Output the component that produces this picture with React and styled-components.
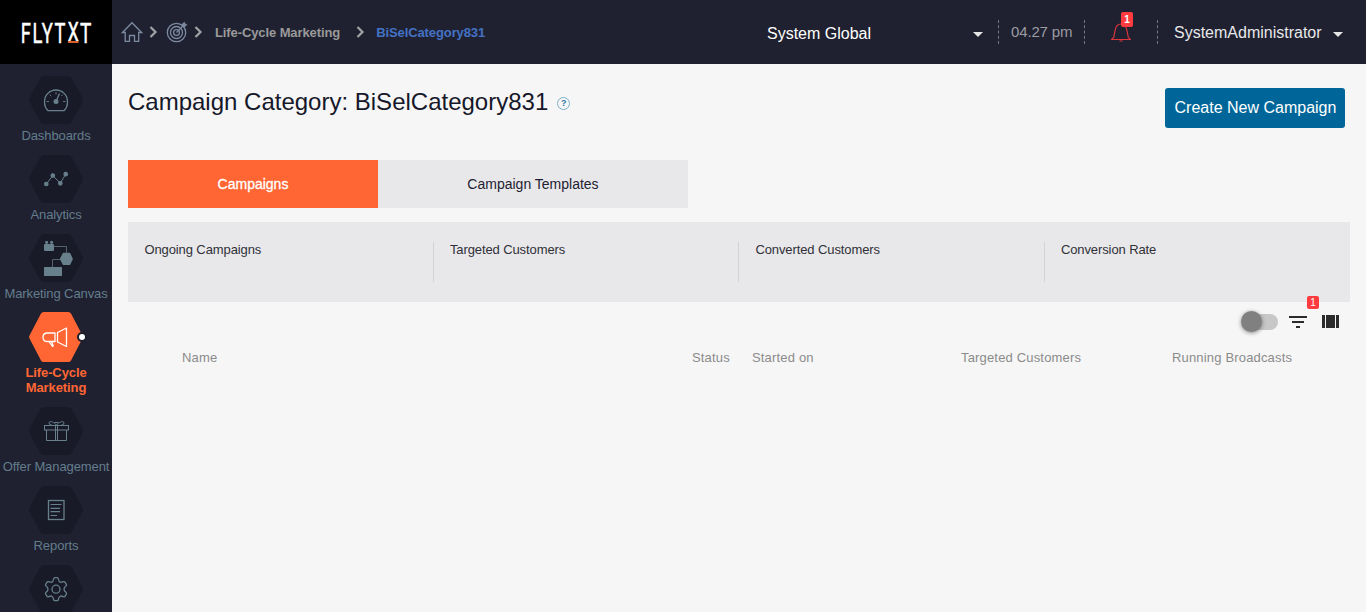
import React from 'react';
import styled, { createGlobalStyle, css } from 'styled-components';

const GlobalStyle = createGlobalStyle`
  * { box-sizing: border-box; }
  body {
    margin: 0;
    background: #f6f6f6;
    font-family: "Liberation Sans", Arial, sans-serif;
    color: #1f2131;
    overflow: hidden;
  }
`;

const Page = styled.div`
  display: grid;
  grid-template: 64px 1fr / 112px 1fr;
  height: 612px;
  overflow: hidden;
`;

const LogoBox = styled.div`
  background: #000;
  svg { display: block; }
`;

const Header = styled.header`
  display: flex;
  align-items: center;
  padding-right: 23px;
  background: #1f2131;
`;

const Crumbs = styled.nav`
  display: flex;
  align-items: center;
  flex: 1;
  padding-left: 9px;
`;

const Crumb = styled.span`
  padding-top: 1px;
  font-size: 13px;
  font-weight: 700;
  line-height: 16px;
  letter-spacing: -0.1px;
  color: ${(p) => (p.$current ? '#4472c4' : '#9a9a9a')};
`;

const Chevron = styled.svg`
  width: 9px;
  height: 12px;
  margin: 0 ${(p) => p.$right}px 0 ${(p) => p.$left}px;
  fill: none;
  stroke: #a2a2a4;
  stroke-width: 2.2;
`;

const CrumbIcon = styled.svg`
  width: 22px;
  height: 22px;
  fill: none;
  stroke: #7c8aa0;
  stroke-width: 1.3;
`;

const Picker = styled.div`
  display: flex;
  align-items: center;
  justify-content: space-between;
  width: ${(p) => p.$width}px;
  color: ${(p) => p.$color};
  font-size: 16px;
  line-height: 20px;
  padding-top: ${(p) => p.$drop}px;
`;

const Caret = styled.span`
  border: 5px solid transparent;
  border-top-color: #e6e6e6;
  border-bottom: 0;
  margin-top: ${(p) => p.$drop}px;
`;

const Clock = styled.div`
  width: 87px;
  height: 24px;
  margin: 0 0 0 15px;
  border-left: 1px dashed #77787f;
  border-right: 1px dashed #77787f;
  padding-left: 12px;
  font-size: 15px;
  line-height: 24px;
  letter-spacing: -0.15px;
  color: #9b9ba1;
`;

const Alerts = styled.div`
  position: relative;
  width: 73px;
  height: 24px;
  border-right: 1px dashed #77787f;
  margin-right: 16px;
  svg { display: block; margin: 0 0 0 26px; }
`;

const Count = styled.span`
  position: absolute;
  top: ${(p) => p.$top}px;
  left: ${(p) => p.$left}px;
  width: 12px;
  height: ${(p) => p.$height}px;
  border-radius: 2px;
  background: #ff3b3f;
  color: #fff;
  font-size: 10px;
  font-weight: ${(p) => p.$weight || 400};
  line-height: ${(p) => p.$height}px;
  text-align: center;
`;

const Sidebar = styled.aside`
  display: flex;
  flex-direction: column;
  gap: 12px;
  padding-top: 12px;
  background: #1f2131;
  overflow: hidden;
`;

const NavItem = styled.a`
  display: flex;
  flex-direction: column;
  align-items: center;
  gap: 4px;
  flex: none;
  font-size: 13px;
  line-height: 15px;
  letter-spacing: -0.1px;
  text-align: center;
  white-space: pre-line;
  color: #637d8c;
  ${(p) => p.$active && css`
    color: #ff6633;
    font-weight: 700;
  `}
`;

const NavIcon = styled.svg`
  display: block;
  width: 56px;
  height: 48px;
  overflow: visible;
  fill: none;
  stroke: #67808b;
  stroke-width: 1.3;
`;

const Main = styled.main`
  padding: 24px 16px 0;
  background: #f6f6f6;
`;

const TitleRow = styled.div`
  display: flex;
  justify-content: space-between;
  padding-right: 5px;
`;

const Title = styled.h1`
  display: flex;
  align-items: center;
  gap: 9px;
  margin: 0;
  height: 28px;
  font-size: 24px;
  font-weight: 400;
  color: #16182a;
`;

const Help = styled.span`
  width: 13px;
  height: 13px;
  margin-top: 3px;
  border: 1px solid #7eafca;
  border-radius: 50%;
  color: #2f7ba5;
  font-size: 9px;
  font-weight: 700;
  line-height: 11px;
  text-align: center;
`;

const Button = styled.button`
  width: 180px;
  height: 40px;
  padding: 0 0 0 1px;
  border: 0;
  border-radius: 3px;
  background: #006699;
  color: #fff;
  font: 16px/38px "Liberation Sans", Arial, sans-serif;
`;

const Tabs = styled.div`
  display: flex;
  margin-top: 32px;
`;

const Tab = styled.div`
  width: ${(p) => p.$width}px;
  height: 48px;
  line-height: 48px;
  font-size: 14px;
  text-align: center;
  background: ${(p) => (p.$active ? '#ff6633' : '#e8e8ea')};
  color: ${(p) => (p.$active ? '#fff' : '#1f2131')};
  ${(p) => p.$active && '-webkit-text-stroke: 0.3px #fff;'}
`;

const Stats = styled.div`
  display: grid;
  grid-template-columns: repeat(4, 1fr);
  height: 80px;
  margin-top: 14px;
  padding: 20px 0;
  background: #e8e8ea;
`;

const Stat = styled.div`
  padding-left: 16.4px;
  font-size: 13px;
  line-height: 15px;
  letter-spacing: -0.1px;
  color: #303038;
  border-right: 1px solid #d3d3d6;
  &:last-child { border-right: 0; }
`;

const Tools = styled.div`
  position: relative;
  display: flex;
  align-items: center;
  justify-content: flex-end;
  height: 39px;
  padding-right: 11px;
`;

const ColumnsIcon = styled.svg`
  margin-left: 15px;
`;

const Toggle = styled.span`
  display: flex;
  align-items: center;
  width: 36px;
  height: 16px;
  border-radius: 8px;
  background: #c7c7c7;
  margin-right: 11px;
  &::before {
    content: '';
    width: 21px;
    height: 21px;
    margin-left: -1px;
    border-radius: 50%;
    background: #808080;
    box-shadow: 0 1px 4px rgba(0, 0, 0, 0.45);
  }
`;

const Table = styled.div`
  display: grid;
  grid-template-columns: 510px 60px 209px 211px 1fr;
  margin-top: 9px;
  padding-left: 54px;
  font-size: 13px;
  line-height: 16px;
  letter-spacing: 0.17px;
  color: #8b8b8b;
`;

const HexShape = ({ active }) =>
  active ? (
    <path d="M15.5 -1H40.5Q42 -1 43 0.5L54.5 22.5Q55.5 24 54.5 25.5L43 47.5Q42 49 40.5 49H15.5Q14 49 13 47.5L1.5 25.5Q0.5 24 1.5 22.5L13 0.5Q14 -1 15.5 -1Z" fill="#ff6633" stroke="none" />
  ) : (
    <path d="M16 0H40Q42.5 0 44 2.5L54.3 21.5Q55.7 24 54.3 26.5L44 45.5Q42.5 48 40 48H16Q13.5 48 12 45.5L1.7 26.5Q0.3 24 1.7 21.5L12 2.5Q13.5 0 16 0Z" fill="#181a28" stroke="none" />
  );

const gauge = (
  <>
    <path d="M20 34.7C17.5 32.5 16.5 29 16.5 25.5A11.5 11.5 0 0 1 39.5 25.5C39.5 29 38.5 32.5 36 34.7Z" strokeLinejoin="round" />
    <circle cx="28" cy="25.5" r="2.5" fill="#67808b" stroke="none" />
    <path d="M28 25.5L31.5 17.5" />
    <path d="M18.5 25.5h2.5M35 25.5h2.5M21.5 18.5l1.7 1.7M28 16v2.5M34.7 18.7l-1.3 1.3" strokeWidth="0.9" />
  </>
);

const lines = (
  <g fill="#67808b">
    <path d="M18.3 29L24.8 20.7L32.3 28.2L37.7 19.2" fill="none" strokeWidth="1" />
    <circle cx="18.3" cy="29" r="1.7" />
    <circle cx="24.8" cy="20.5" r="1.7" />
    <circle cx="32.3" cy="28.3" r="1.7" />
    <circle cx="37.7" cy="19.2" r="1.7" />
  </g>
);

const canvas = (
  <>
    <g fill="#67808b" stroke="none">
      <rect x="16" y="10" width="10" height="7" rx="1" />
      <circle cx="18.6" cy="8.3" r="1.5" />
      <circle cx="23.6" cy="8.3" r="1.5" />
      <rect x="18" y="8" width="1.2" height="3" />
      <rect x="23" y="8" width="1.2" height="3" />
      <path d="M35.5 18.8H41.5Q42 18.8 42.3 19.3L44.6 24.2Q45 25 44.6 25.8L42.3 30.5Q42 31 41.5 31H35.5Q35 31 34.7 30.5L32.2 25.8Q31.8 25 32.2 24.2L34.7 19.3Q35 18.8 35.5 18.8Z" />
      <rect x="16" y="33" width="18" height="9" rx="0.5" />
    </g>
    <path d="M26 12.5H38.5V19M32 25.5H24.5V33" strokeWidth="1" stroke="#54646f" />
  </>
);

const horn = (
  <>
    <g stroke="#fff" strokeWidth="1.3" strokeLinejoin="round">
      <path d="M27 20H19.5Q15 20 15 24.2Q15 28.5 19.5 28.5H27Z" />
      <path d="M29.5 19.5L38.5 15V33.5L29.5 29Z" />
      <path d="M21 28.5L24.5 33.5L25.2 32.7L23.5 28.5" />
    </g>
    <circle cx="54" cy="24" r="5" fill="#1b1d2b" stroke="none" />
    <circle cx="54" cy="24" r="3" fill="#fff" stroke="none" />
  </>
);

const gift = (
  <g strokeWidth="1">
    <rect x="16.5" y="18.5" width="24" height="4.5" />
    <path d="M18.5 23V33.5H38.5V23M27.5 18.5V33.5M29.5 18.5V33.5" />
    <path d="M28.5 18.3C26 14.5 21 13.5 21 16Q21 18 24 18.3M28.5 18.3C31 14.5 36 13.5 36 16Q36 18 33 18.3M26.5 15.5h4" />
  </g>
);

const report = (
  <>
    <rect x="20.5" y="14.5" width="15.5" height="19" />
    <path d="M22.5 18.5h11M22.5 22.3h9.5M22.5 25.7h9.5M22.5 29.5h6.5" strokeWidth="1.2" />
  </>
);

const gear = (
  <>
    <path d="M27 12.700H29Q30.200 12.700 30.400 14Q30.800 16.800 32.600 17.400Q33.500 17.500 35.400 16.700Q36.500 16.300 37 17.100L38.300 19.300Q38.900 20.300 37.900 21.100Q36 22.500 36 24.200Q36 25.900 37.900 27.300Q38.900 28.100 38.300 29.100L37 31.300Q36.500 32.100 35.400 31.700Q33.500 30.900 32.600 31Q30.800 31.600 30.400 34.400Q30.200 35.700 29 35.700H27Q25.800 35.700 25.600 34.400Q25.200 31.600 23.400 31Q22.500 30.900 20.600 31.700Q19.500 32.100 19 31.300L17.700 29.100Q17.100 28.100 18.100 27.300Q20 25.900 20 24.200Q20 22.500 18.100 21.100Q17.100 20.300 17.700 19.300L19 17.100Q19.500 16.300 20.600 16.700Q22.500 17.500 23.400 17.400Q25.200 16.800 25.600 14Q25.800 12.700 27 12.700Z" />
    <circle cx="28" cy="24.2" r="4" />
  </>
);

const navItems = [
  { label: 'Dashboards', art: gauge },
  { label: 'Analytics', art: lines },
  { label: 'Marketing Canvas', art: canvas },
  { label: 'Life-Cycle\nMarketing', art: horn, active: true },
  { label: 'Offer Management', art: gift },
  { label: 'Reports', art: report },
  { label: '', art: gear },
];

const Separator = ({ left, right }) => (
  <Chevron viewBox="0 0 9 12" $left={left} $right={right}>
    <path d="M1.5 1L6.5 6L1.5 11" />
  </Chevron>
);

const Logo = () => (
  <LogoBox>
    <svg width="112" height="64" viewBox="0 0 112 64" fill="#fff" stroke="#fff" strokeWidth="0.5" fontFamily="Roboto, sans-serif">
      <text x="20.7" y="42.8" fontSize="28" letterSpacing="2.5" textLength="46.5" lengthAdjust="spacingAndGlyphs">FLYT</text>
      <text x="67.7" y="40.8" fontSize="25" textLength="11" lengthAdjust="spacingAndGlyphs">X</text>
      <text x="80" y="42.8" fontSize="28" textLength="11.3" lengthAdjust="spacingAndGlyphs">T</text>
      <rect x="68" y="41" width="10.5" height="2" fill="#d9622b" stroke="none" />
    </svg>
  </LogoBox>
);

export default function App() {
  return (
    <Page>
      <GlobalStyle />
      <Logo />
      <Header>
        <Crumbs>
          <CrumbIcon viewBox="0 0 22 22">
            <path d="M1.5 11.5L11 1.7L20.5 11.5H17.7V20.4H13.5V14.5H8.5V20.4H4.2V11.5Z" />
          </CrumbIcon>
          <Separator left={6} right={8} />
          <CrumbIcon viewBox="0 0 22 22">
            <circle cx="10.5" cy="11.5" r="9.2" />
            <circle cx="10.5" cy="11.5" r="6" />
            <circle cx="10.5" cy="11.5" r="2.9" />
            <path d="M10.5 11.5L17 5" />
            <path d="M16 5.5V3.3L18.5 1L19 3L21 3.5L18.7 6Z" fill="#7c8aa0" strokeWidth="0.6" />
          </CrumbIcon>
          <Separator left={6} right={12} />
          <Crumb>Life-Cycle Marketing</Crumb>
          <Separator left={16} right={11} />
          <Crumb $current>BiSelCategory831</Crumb>
        </Crumbs>
        <Picker $width={216} $color="#fff" $drop={3}>
          System Global
          <Caret $drop={2} />
        </Picker>
        <Clock>04.27 pm</Clock>
        <Alerts>
          <svg width="20" height="24" viewBox="0 0 20 24" fill="none" stroke="#e0353b" strokeWidth="1.2">
            <path d="M0.5 19.5H19.5L17.3 17.3L15.8 10Q14.7 4 10 4Q5.3 4 4.2 10L2.7 17.3ZM8.5 21H11.5" />
          </svg>
          <Count $top={-8} $left={36} $height={15} $weight={700}>1</Count>
        </Alerts>
        <Picker $width={169} $color="#e8e8ea" $drop={1}>
          SystemAdministrator
          <Caret $drop={4} />
        </Picker>
      </Header>
      <Sidebar>
        {navItems.map(({ label, art, active }) => (
          <NavItem key={label} $active={active}>
            <NavIcon viewBox="0 0 56 48">
              <HexShape active={active} />
              {art}
            </NavIcon>
            {label && <span>{label}</span>}
          </NavItem>
        ))}
      </Sidebar>
      <Main>
        <TitleRow>
          <Title>
            Campaign Category: BiSelCategory831
            <Help>?</Help>
          </Title>
          <Button>Create New Campaign</Button>
        </TitleRow>
        <Tabs>
          <Tab $width={250} $active>Campaigns</Tab>
          <Tab $width={310}>Campaign Templates</Tab>
        </Tabs>
        <Stats>
          <Stat>Ongoing Campaigns</Stat>
          <Stat>Targeted Customers</Stat>
          <Stat>Converted Customers</Stat>
          <Stat>Conversion Rate</Stat>
        </Stats>
        <Tools>
          <Toggle />
          <svg width="18" height="12" viewBox="0 0 18 12" fill="#2b2b2b">
            <path d="M0 0h18v2H0zM3 5h12v2H3zM7 10h4v2H7z" />
          </svg>
          <ColumnsIcon width="17" height="13" viewBox="0 0 17 13" fill="#2b2b2b">
            <path d="M0 0h3v13H0zM4 0h9v13H4zM14 0h3v13h-3z" />
          </ColumnsIcon>
          <Count $top={-6} $left={1179} $height={13}>1</Count>
        </Tools>
        <Table>
          <span>Name</span>
          <span>Status</span>
          <span>Started on</span>
          <span>Targeted Customers</span>
          <span>Running Broadcasts</span>
        </Table>
      </Main>
    </Page>
  );
}
